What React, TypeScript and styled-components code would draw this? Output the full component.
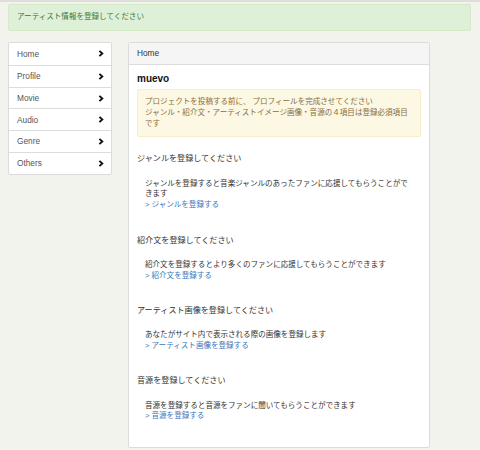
import React from "react";
import styled, { createGlobalStyle } from "styled-components";

const GlobalStyle = createGlobalStyle`
  html, body {
    margin: 0;
    padding: 0;
    background: #f3f3ee;
  }
  body {
    font-family: "Liberation Sans", "Noto Sans CJK JP", sans-serif;
    font-size: 7.56px;
    line-height: 10.8px;
    color: #333;
  }
  * { box-sizing: border-box; }
`;

const Page = styled.div`
  border-top: 2px solid #dededa;
  padding: 2px 9px 0 8px;
`;

const Alert = styled.div`
  height: 27px;
  display: flex;
  align-items: center;
  padding: 0 8px;
  background: #dff0d8;
  border: 1px solid #d6e9c6;
  border-radius: 2px;
  color: #3c763d;
  margin-bottom: 11px;
`;

const Row = styled.div`
  display: flex;
  align-items: flex-start;
  gap: 16px;
`;

const SideList = styled.ul`
  list-style: none;
  margin: 0;
  padding: 0;
  width: 104px;
  background: #fff;
  border: 1px solid #dcdcdc;
  border-radius: 2px;
`;

const SideItem = styled.li<{ $first?: boolean }>`
  height: 21.83px;
  display: flex;
  align-items: center;
  justify-content: space-between;
  padding: 0 7px 0 8px;
  font-size: 8.3px;
  color: #555;
  border-top: ${(p) => (p.$first ? "none" : "1px solid #dcdcdc")};
`;

const Chevron = () => (
  <svg width="6" height="7" viewBox="0 0 6 7">
    <polyline
      points="1.4,0.9 4.3,3.5 1.4,6.1"
      fill="none"
      stroke="#111"
      strokeWidth="1.9"
      strokeLinecap="butt"
      strokeLinejoin="miter"
    />
  </svg>
);

const Panel = styled.section`
  width: 302px;
  background: #fff;
  border: 1px solid #dcdcdc;
  border-radius: 2px;
`;

const PanelHeader = styled.div`
  height: 22px;
  display: flex;
  align-items: center;
  padding: 0 8px;
  background: #f5f5f5;
  border-bottom: 1px solid #dcdcdc;
  font-size: 8.3px;
  color: #333;
`;

const PanelBody = styled.div`
  padding: 8px 8px 17px 8px;
`;

const Name = styled.h4`
  margin: 0 0 5px 0;
  font-size: 10px;
  line-height: 11px;
  font-weight: bold;
  color: #111;
`;

const Warning = styled.div`
  padding: 7px;
  background: #fcf8e3;
  border: 1px solid #faebcc;
  border-radius: 2px;
  color: #8a6d3b;
`;

const Section = styled.div`
  margin-top: 17px;
  padding-bottom: 7.5px;
`;

const SectionTitle = styled.h5`
  margin: 0;
  font-size: 8.1px;
  line-height: 10.8px;
  font-weight: normal;
  color: #333;
`;

const SectionBody = styled.div`
  margin-top: 13.5px;
  padding: 0 13px 0 8px;
`;

const Desc = styled.p`
  margin: 0;
  word-break: break-all;
`;

const Link = styled.a`
  display: block;
  color: #3a76ba;
  text-decoration: none;
`;

const menu = ["Home", "Profile", "Movie", "Audio", "Genre", "Others"];

const sections = [
  {
    title: "ジャンルを登録してください",
    desc: "ジャンルを登録すると音楽ジャンルのあったファンに応援してもらうことができます",
    link: "ジャンルを登録する",
  },
  {
    title: "紹介文を登録してください",
    desc: "紹介文を登録するとより多くのファンに応援してもらうことができます",
    link: "紹介文を登録する",
  },
  {
    title: "アーティスト画像を登録してください",
    desc: "あなたがサイト内で表示される際の画像を登録します",
    link: "アーティスト画像を登録する",
  },
  {
    title: "音源を登録してください",
    desc: "音源を登録すると音源をファンに聞いてもらうことができます",
    link: "音源を登録する",
  },
];

export default function App() {
  return (
    <>
      <GlobalStyle />
      <Page>
        <Alert>アーティスト情報を登録してください</Alert>
        <Row>
          <SideList>
            {menu.map((m, i) => (
              <SideItem key={m} $first={i === 0}>
                <span>{m}</span>
                <Chevron />
              </SideItem>
            ))}
          </SideList>
          <Panel>
            <PanelHeader>Home</PanelHeader>
            <PanelBody>
              <Name>muevo</Name>
              <Warning>
                プロジェクトを投稿する前に、 プロフィールを完成させてください
                <br />
                ジャンル・紹介文・アーティストイメージ画像・音源の４項目は登録必須項目です
              </Warning>
              {sections.map((s) => (
                <Section key={s.title}>
                  <SectionTitle>{s.title}</SectionTitle>
                  <SectionBody>
                    <Desc>{s.desc}</Desc>
                    <Link href="#">&gt; {s.link}</Link>
                  </SectionBody>
                </Section>
              ))}
            </PanelBody>
          </Panel>
        </Row>
      </Page>
    </>
  );
}
